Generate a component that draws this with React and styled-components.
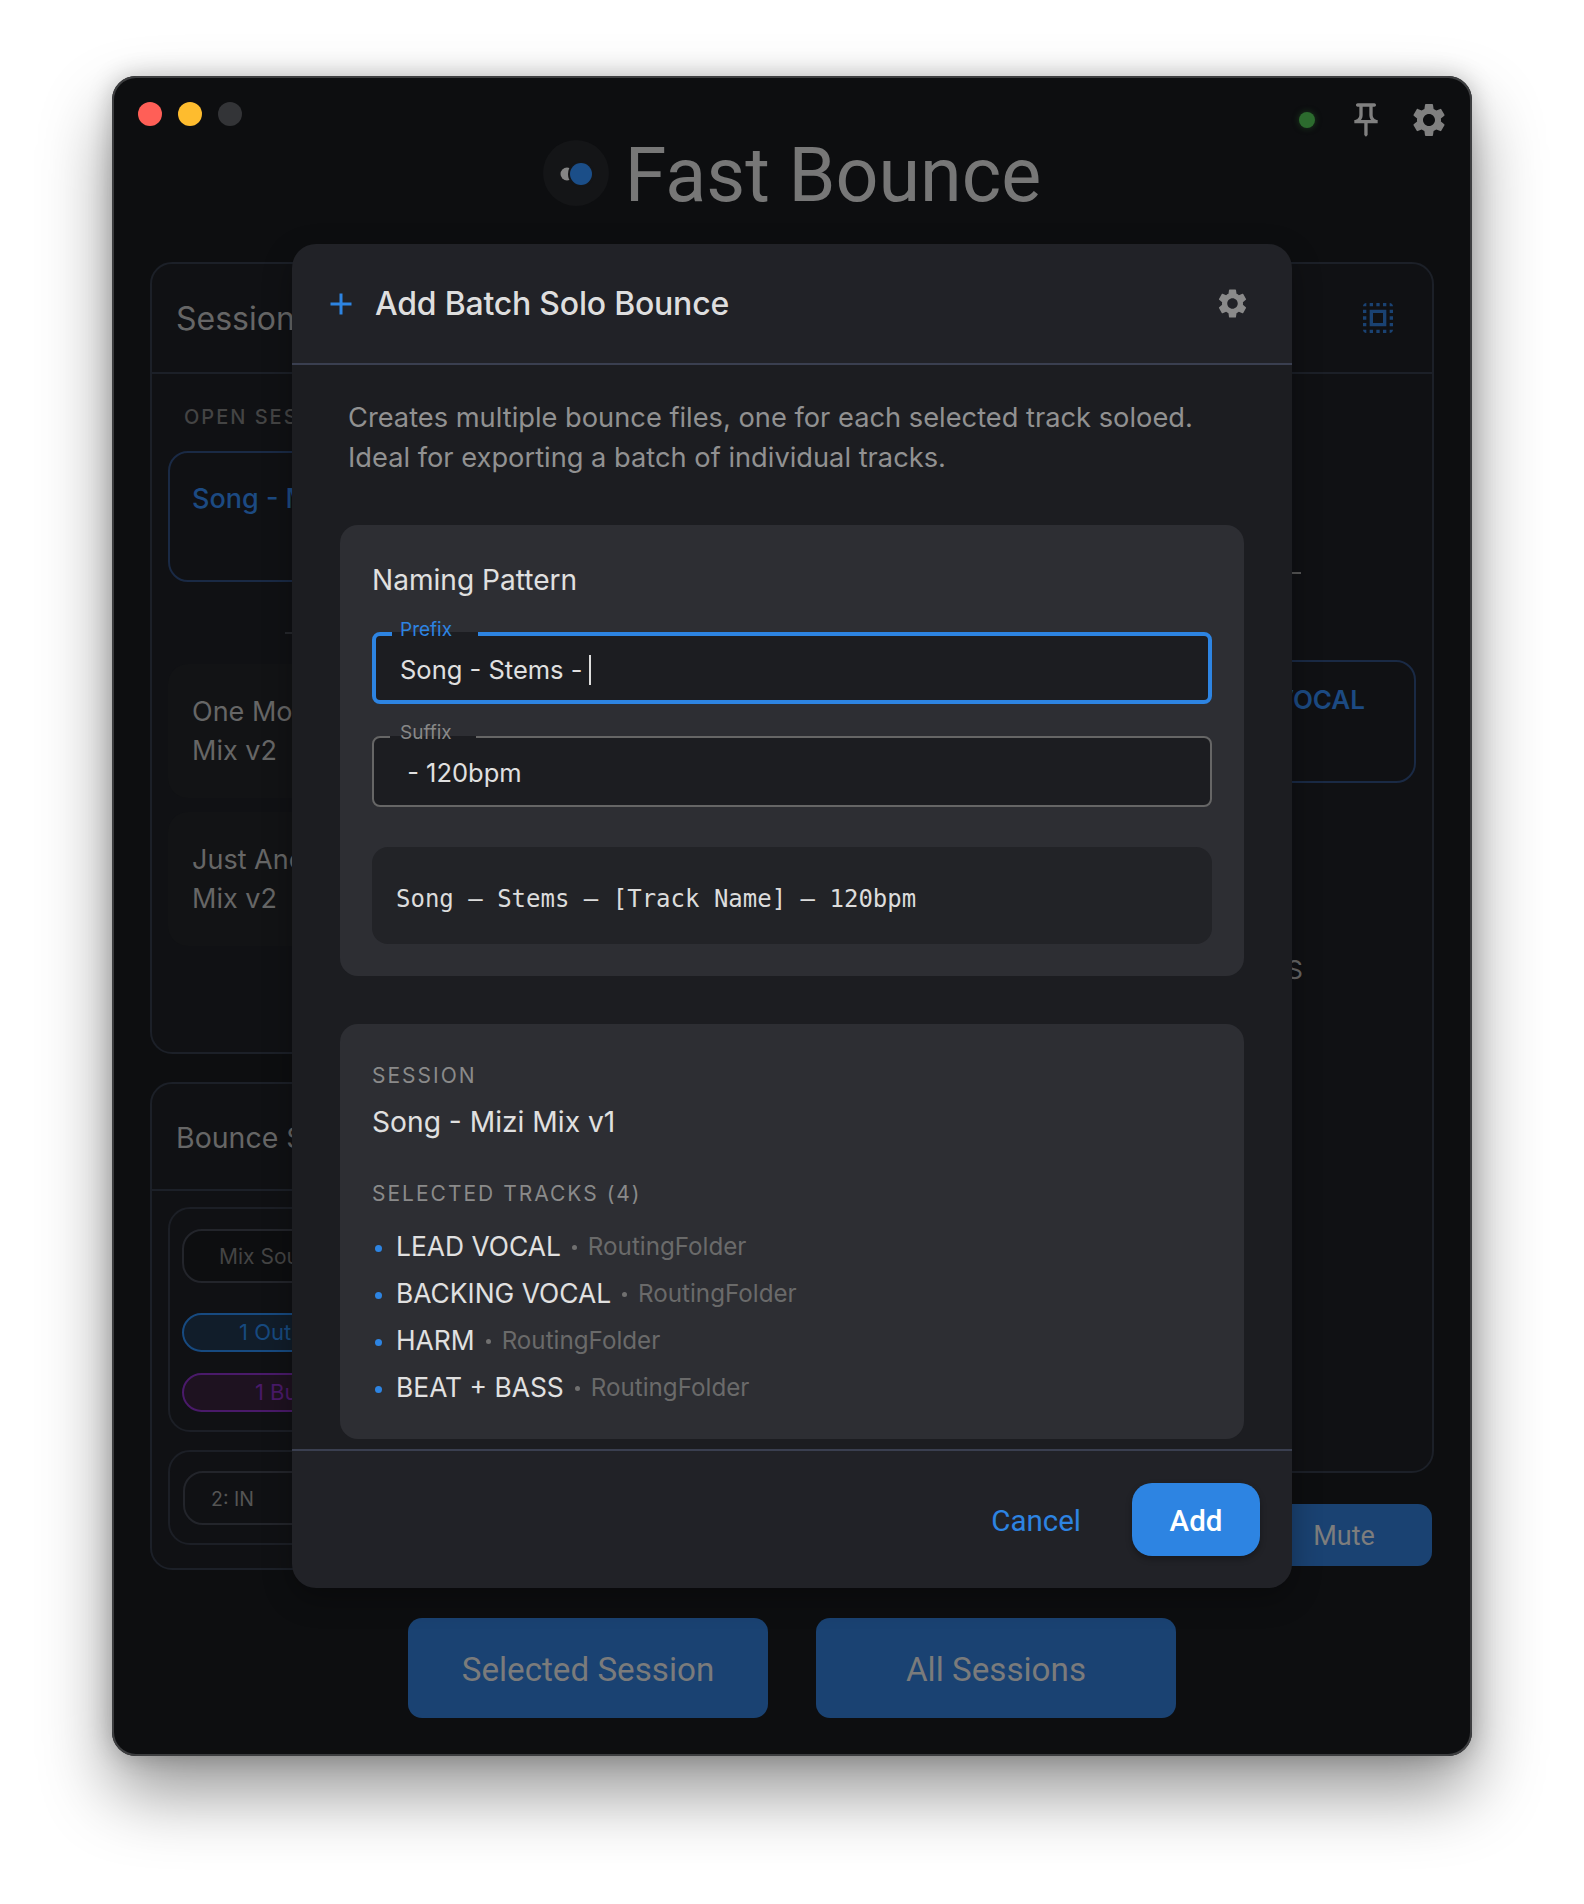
import React from 'react';
import styled, { createGlobalStyle } from 'styled-components';
import { MdAdd, MdOutlinePushPin, MdSelectAll, MdSettings } from 'react-icons/md';

const sans = '"Inter", "Liberation Sans", sans-serif';
const roboto = 'Roboto, "Liberation Sans", sans-serif';

const GlobalStyle = createGlobalStyle`
  html, body {
    margin: 0;
    background: #fff;
  }
  * {
    box-sizing: border-box;
  }
`;

const Page = styled.div`
  width: 1584px;
  height: 1904px;
  padding: 76px 112px 0;
  overflow: hidden;
`;

const Window = styled.div`
  position: relative;
  width: 1360px;
  height: 1680px;
  background: #0d0e10;
  border-radius: 24px;
  overflow: visible;
  box-shadow: inset 0 0 0 2px #3d3e40, 0 36px 70px rgba(0, 0, 0, 0.42), 0 0 24px rgba(0, 0, 0, 0.22);
`;

const TopBar = styled.div`
  display: flex;
  align-items: flex-start;
  justify-content: space-between;
  height: 64px;
  padding: 24px 23px 0 26px;
`;

const Lights = styled.div`
  display: flex;
  gap: 16px;
  padding-top: 2px;
`;

const Light = styled.span`
  width: 24px;
  height: 24px;
  border-radius: 50%;
  background: ${p => p.$color};
`;

const Status = styled.div`
  display: flex;
  align-items: center;
  color: #808080;
  svg {
    display: block;
  }
`;

const Dot = styled.span`
  width: 16px;
  height: 16px;
  margin-right: 31px;
  border-radius: 50%;
  background: #2c6b2e;
  box-shadow: 0 0 6px rgba(44, 107, 46, 0.5);
`;

const Pin = styled(MdOutlinePushPin)`
  margin-right: 23px;
`;

const Brand = styled.div`
  display: flex;
  align-items: center;
  justify-content: center;
  gap: 16px;
  height: 66px;
`;

const Title = styled.h1`
  margin: 4px 0 0;
  font: 400 75.4px/66px ${roboto};
  color: #777;
`;

const Columns = styled.div`
  display: grid;
  grid-template-columns: 640px 624px;
  gap: 20px;
  margin: 56px 0 0 38px;
`;

const Column = styled.div`
  display: flex;
  flex-direction: column;
`;

const Panel = styled.section`
  height: ${p => p.$height}px;
  margin-top: ${p => p.$top || 0}px;
  background: #101114;
  border: 2px solid #1c2028;
  border-radius: 22px;
  overflow: hidden;
`;

const PanelHeader = styled.div`
  display: flex;
  align-items: center;
  justify-content: space-between;
  height: ${p => p.$height}px;
  padding: ${p => p.$offset || 0}px 34px 0 24px;
  border-bottom: 2px solid #1c2028;
  color: #1a4272;
  svg {
    display: block;
  }
`;

const PanelTitle = styled.h2`
  margin: 0;
  font: 400 ${p => p.$size || 32}px/40px ${sans};
  color: #666;
`;

const PanelBody = styled.div`
  padding: ${p => p.$pad};
`;

const OpenLabel = styled.div`
  height: 28px;
  margin-bottom: 20px;
  padding-left: 16px;
  font: 500 20px/28px ${sans};
  letter-spacing: 2px;
  color: #444;
`;

const SessionCard = styled.div`
  height: ${p => (p.$active ? 131 : 134)}px;
  margin-top: ${p => p.$top}px;
  padding: ${p => (p.$active ? 26 : 28)}px ${p => (p.$active ? 22 : 24)}px;
  border: ${p => (p.$active ? '2px solid #1a2a45' : '0')};
  border-radius: 20px;
  background: ${p => (p.$active ? 'transparent' : '#121315')};
  font: ${p => (p.$active ? 500 : 400)} 27px/39px ${sans};
  color: ${p => (p.$active ? '#1c4a82' : '#666')};
  white-space: pre-line;
`;

const Rule = styled.div`
  width: 300px;
  height: 2px;
  margin: 50px 0 0 117px;
  background: #26282d;
`;

const GroupCard = styled.div`
  display: flex;
  flex-direction: column;
  align-items: flex-start;
  height: ${p => p.$height}px;
  margin-top: ${p => p.$top || 0}px;
  padding: ${p => p.$pad};
  border: 2px solid #1c1f26;
  border-radius: 22px;
`;

const SelectBox = styled.div`
  width: 210px;
  height: 54px;
  padding-left: ${p => p.$inset}px;
  border: 2px solid #23252b;
  border-radius: 20px;
  background: ${p => (p.$dark ? '#0d0e10' : 'transparent')};
  font: 400 ${p => p.$size}px/52px ${sans};
  color: ${p => p.$color};
  white-space: nowrap;
`;

const BusPill = styled.div`
  width: ${p => p.$width}px;
  height: 39px;
  margin-top: ${p => p.$top}px;
  border: 2px solid ${p => p.$color};
  border-radius: 20px;
  background: ${p => p.$bg};
  font: 400 22px/35px ${sans};
  text-align: center;
  color: ${p => p.$color};
`;

const FadedDash = styled.div`
  width: 200px;
  height: 2px;
  margin: 182px 115px 0 auto;
  background: #555;
`;

const TrackCard = styled.div`
  height: 123px;
  margin-top: 86px;
  padding: 18px 49px 0 0;
  border: 2px solid #1a2a45;
  border-radius: 20px;
  font: 600 26px/40px ${sans};
  text-align: right;
  color: #1c4a82;
`;

const TrackLine = styled.div`
  margin-top: 167px;
  padding-right: 113px;
  font: 400 26px/40px ${sans};
  text-align: right;
  color: #666;
`;

const ActionRow = styled.div`
  display: flex;
  justify-content: flex-end;
  gap: 16px;
  margin-top: 31px;
  padding-right: 2px;
`;

const SmallAction = styled.button`
  width: 176px;
  height: 62px;
  border: 0;
  border-radius: 14px;
  background: #1a4272;
  font: 400 27px/62px ${roboto};
  color: #7d7d7d;
`;

const BounceRow = styled.div`
  display: flex;
  justify-content: center;
  gap: 48px;
  margin-top: 48px;
`;

const BounceButton = styled.button`
  width: 360px;
  height: 100px;
  padding-top: 4px;
  border: 0;
  border-radius: 14px;
  background: #1a4272;
  font: 400 33.2px/96px ${roboto};
  color: #7b7b7b;
`;

/* dialog */

const Modal = styled.div`
  position: absolute;
  left: 180px;
  top: 168px;
  display: flex;
  flex-direction: column;
  width: 1000px;
  height: 1344px;
  border-radius: 24px;
  background: #212227;
  overflow: hidden;
  box-shadow: 0 10px 30px rgba(0, 0, 0, 0.3);
`;

const ModalHeader = styled.div`
  display: flex;
  align-items: center;
  flex: none;
  height: 121px;
  padding: 0 42px 0 31px;
  border-bottom: 2px solid #3a3f50;
  color: #8a8a8a;
  svg {
    display: block;
  }
`;

const PlusIcon = styled(MdAdd)`
  flex: none;
  margin-right: 16px;
  color: #2d84e2;
`;

const ModalTitle = styled.h2`
  flex: 1;
  margin: 0;
  font: 500 32px/40px ${sans};
  letter-spacing: -0.22px;
  color: #dedede;
`;

const ModalBody = styled.div`
  flex: 1;
  min-height: 0;
  padding: 33px 48px 0;
  background: #1c1d21;
  overflow: hidden;
`;

const Intro = styled.p`
  margin: 0 0 47px;
  padding-left: 8px;
  font: 400 27.25px/40px ${sans};
  color: #919191;
`;

const Card = styled.div`
  margin-top: ${p => p.$top || 0}px;
  padding: ${p => p.$pad};
  border-radius: 18px;
  background: #2d2e33;
`;

const CardTitle = styled.div`
  margin-bottom: 29px;
  font: 400 28.1px/46px ${sans};
  color: #e0e0e0;
`;

const Field = styled.div`
  position: relative;
  height: ${p => (p.$focused ? 72 : 71)}px;
  margin-top: ${p => p.$top || 0}px;
  padding-left: ${p => (p.$focused ? 24 : 26)}px;
  border: ${p => (p.$focused ? '4px solid #2d84e2' : '2px solid #666')};
  border-radius: 8px;
  background: #1c1d21;
  font: 400 25.5px/${p => (p.$focused ? 68 : 69)}px ${sans};
  color: #e0e0e0;
  white-space: pre;
`;

const FieldNotch = styled.span`
  position: absolute;
  top: ${p => (p.$focused ? -4 : -2)}px;
  left: 16px;
  width: 86px;
  height: ${p => (p.$focused ? 4 : 2)}px;
  background: #1c1d21;
`;

const FieldLabel = styled.label`
  position: absolute;
  top: ${p => (p.$focused ? -18 : -17)}px;
  left: ${p => (p.$focused ? 24 : 26)}px;
  font: 400 19px/24px ${sans};
  color: ${p => (p.$focused ? '#2d84e2' : '#888')};
`;

const Caret = styled.span`
  display: inline-block;
  width: 2px;
  height: 30px;
  margin-left: -1px;
  vertical-align: -6px;
  background: #ddd;
`;

const Preview = styled.div`
  height: 97px;
  margin-top: 40px;
  padding: 0 24px;
  border-radius: 16px;
  background: #222327;
  font: 400 24px/105px "DejaVu Sans Mono", "Liberation Mono", monospace;
  color: #dcdcdc;
  white-space: pre;
`;

const MetaLabel = styled.div`
  margin-top: ${p => p.$top || 0}px;
  font: 400 21px/38px ${sans};
  letter-spacing: 2px;
  color: #8a8a8a;
`;

const SessionName = styled.div`
  margin-top: 7px;
  font: 400 28.2px/40px ${sans};
  color: #e0e0e0;
`;

const TrackList = styled.ul`
  margin: 10px 0 0;
  padding: 0;
  list-style: none;
`;

const TrackItem = styled.li`
  display: flex;
  align-items: center;
  height: 47px;
  font: 400 26.4px/47px ${sans};
  color: #e0e0e0;
`;

const Bullet = styled.span`
  width: 7px;
  height: 7px;
  margin: 3px 14px 0 3px;
  border-radius: 50%;
  background: #2d84e2;
`;

const RouteDot = styled.span`
  width: 5px;
  height: 5px;
  margin: 2px 11px 0 11px;
  border-radius: 50%;
  background: #707070;
`;

const RouteName = styled.span`
  font-size: 24.2px;
  color: #6a6a6a;
`;

const ModalFooter = styled.div`
  display: flex;
  align-items: flex-start;
  justify-content: flex-end;
  flex: none;
  height: 139px;
  padding: 32px 32px 0 0;
  border-top: 2px solid #3a3f50;
`;

const CancelButton = styled.button`
  height: 73px;
  margin-right: 51px;
  padding: 3px 0 0;
  border: 0;
  background: none;
  font: 400 29.5px/70px ${roboto};
  color: #2d84e2;
`;

const AddButton = styled.button`
  width: 128px;
  height: 73px;
  padding: 3px 0 0;
  border: 0;
  border-radius: 20px;
  background: #2d84e2;
  font: 500 29.5px/70px ${roboto};
  color: #fff;
  box-shadow: 0 3px 6px rgba(0, 0, 0, 0.3);
`;

const tracks = ['LEAD VOCAL', 'BACKING VOCAL', 'HARM', 'BEAT + BASS'];

function Logo() {
  return (
    <svg width="66" height="66" viewBox="0 0 66 66">
      <circle cx="33" cy="33" r="33" fill="#141517" />
      <circle cx="24" cy="34" r="6.5" fill="#858585" />
      <circle cx="38" cy="34" r="13" fill="#141517" />
      <circle cx="38" cy="34" r="11" fill="#1b4e88" />
    </svg>
  );
}

export default function App() {
  return (
    <Page>
      <GlobalStyle />
      <Window>
        <TopBar>
          <Lights>
            <Light $color="#ff5f57" />
            <Light $color="#febc2e" />
            <Light $color="#333437" />
          </Lights>
          <Status>
            <Dot />
            <Pin size={40} />
            <MdSettings size={40} />
          </Status>
        </TopBar>

        <Brand>
          <Logo />
          <Title>Fast Bounce</Title>
        </Brand>

        <Columns>
          <Column>
            <Panel $height={792}>
              <PanelHeader $height={110} $offset={2}>
                <PanelTitle>Sessions</PanelTitle>
              </PanelHeader>
              <PanelBody $pad="29px 16px 0">
                <OpenLabel>OPEN SESSIONS</OpenLabel>
                <SessionCard $active $top={0}>Song - Mizi Mix v1</SessionCard>
                <Rule />
                <SessionCard $top={30}>{'One More Song\nMix v2'}</SessionCard>
                <SessionCard $top={14}>{'Just Another Song\nMix v2'}</SessionCard>
              </PanelBody>
            </Panel>

            <Panel $height={488} $top={28}>
              <PanelHeader $height={107} $offset={2}>
                <PanelTitle $size={28.5}>Bounce Settings</PanelTitle>
              </PanelHeader>
              <PanelBody $pad="16px 16px 0">
                <GroupCard $height={225} $pad="20px 12px">
                  <SelectBox $dark $inset={35} $size={21} $color="#444">Mix Source</SelectBox>
                  <BusPill $top={30} $width={200} $color="#174a80" $bg="#111d2a">1 Output</BusPill>
                  <BusPill $top={21} $width={200} $color="#4a1a6a" $bg="#1e1220">1 Bus</BusPill>
                </GroupCard>
                <GroupCard $height={95} $top={18} $pad="19px 13px">
                  <SelectBox $inset={26} $size={19.5} $color="#555">2: IN</SelectBox>
                </GroupCard>
              </PanelBody>
            </Panel>
          </Column>

          <Column>
            <Panel $height={1211}>
              <PanelHeader $height={110}>
                <PanelTitle>Tracks</PanelTitle>
                <MdSelectAll size={40} />
              </PanelHeader>
              <PanelBody $pad="16px">
                <FadedDash />
                <TrackCard>LEAD VOCAL</TrackCard>
                <TrackLine>BEAT + BASS</TrackLine>
              </PanelBody>
            </Panel>
            <ActionRow>
              <SmallAction>Solo</SmallAction>
              <SmallAction>Mute</SmallAction>
            </ActionRow>
          </Column>
        </Columns>

        <BounceRow>
          <BounceButton>Selected Session</BounceButton>
          <BounceButton>All Sessions</BounceButton>
        </BounceRow>

        <Modal>
          <ModalHeader>
            <PlusIcon size={36} />
            <ModalTitle>Add Batch Solo Bounce</ModalTitle>
            <MdSettings size={35} />
          </ModalHeader>

          <ModalBody>
            <Intro>
              Creates multiple bounce files, one for each selected track soloed.
              <br />
              Ideal for exporting a batch of individual tracks.
            </Intro>

            <Card $pad="32px">
              <CardTitle>Naming Pattern</CardTitle>
              <Field $focused>
                <FieldNotch $focused />
                <FieldLabel $focused>Prefix</FieldLabel>
                Song - Stems - <Caret />
              </Field>
              <Field $top={32}>
                <FieldNotch />
                <FieldLabel>Suffix</FieldLabel>
                {' - 120bpm'}
              </Field>
              <Preview>Song – Stems – [Track Name] – 120bpm</Preview>
            </Card>

            <Card $top={48} $pad="33px 32px 28px">
              <MetaLabel>SESSION</MetaLabel>
              <SessionName>Song - Mizi Mix v1</SessionName>
              <MetaLabel $top={33}>SELECTED TRACKS (4)</MetaLabel>
              <TrackList>
                {tracks.map(name => (
                  <TrackItem key={name}>
                    <Bullet />
                    {name}
                    <RouteDot />
                    <RouteName>RoutingFolder</RouteName>
                  </TrackItem>
                ))}
              </TrackList>
            </Card>
          </ModalBody>

          <ModalFooter>
            <CancelButton>Cancel</CancelButton>
            <AddButton>Add</AddButton>
          </ModalFooter>
        </Modal>
      </Window>
    </Page>
  );
}
